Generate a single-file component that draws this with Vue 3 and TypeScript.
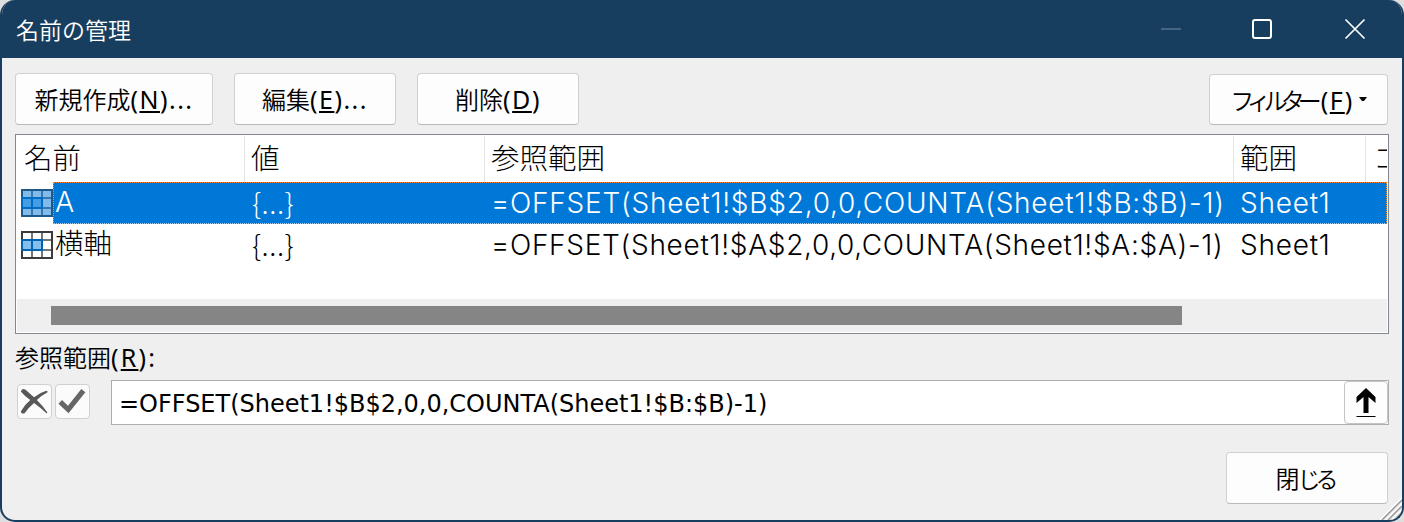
<script setup lang="ts">
import { ref } from 'vue'

interface DefinedName {
  name: string
  value: string
  refersTo: string
  scope: string
}

const names: DefinedName[] = [
  { name: 'A', value: '{...}', refersTo: '=OFFSET(Sheet1!$B$2,0,0,COUNTA(Sheet1!$B:$B)-1)', scope: 'Sheet1' },
  { name: '横軸', value: '{...}', refersTo: '=OFFSET(Sheet1!$A$2,0,0,COUNTA(Sheet1!$A:$A)-1)', scope: 'Sheet1' },
]

const actions = [
  { label: '新規作成', key: 'N', tail: '...', kind: 'new' },
  { label: '編集', key: 'E', tail: '...', kind: 'edit' },
  { label: '削除', key: 'D', tail: '', kind: 'delete' },
]

const selected = ref(0)
</script>

<template>
  <div class="desktop">
    <div class="window">
      <header class="titlebar">
        <h1 class="title">名前の管理</h1>
        <div class="controls">
          <svg class="control dim" viewBox="0 0 22 22"><path d="M1 11H21" /></svg>
          <svg class="control" viewBox="0 0 22 22"><rect x="2" y="2" width="18" height="18" rx="2" /></svg>
          <svg class="control thin" viewBox="0 0 22 22"><path d="M1.5 1.5L20.5 20.5M20.5 1.5L1.5 20.5" /></svg>
        </div>
      </header>

      <main class="body">
        <div class="toolbar">
          <button v-for="a in actions" :key="a.key" class="btn" :class="a.kind">
            <span class="jp">{{ a.label }}</span><span class="lat">(<u>{{ a.key }}</u>){{ a.tail }}</span>
          </button>
          <button class="btn filter">
            <span class="kana">フィルター</span><span class="lat">(<u>F</u>)</span>
            <svg class="caret" viewBox="0 0 8 5"><path d="M0 0H8L5 4H3Z" /></svg>
          </button>
        </div>

        <div class="list">
          <div class="row head">
            <span class="cell first">名前</span>
            <span class="cell">値</span>
            <span class="cell">参照範囲</span>
            <span class="cell">範囲</span>
            <span class="cell last">コ</span>
          </div>
          <div
            v-for="(n, i) in names"
            :key="n.name"
            class="row item"
            :class="{ selected: i === selected }"
            @click="selected = i"
          >
            <svg class="grid-icon" viewBox="0 0 32 28">
              <rect class="paper" x="1" y="1" width="30" height="26" />
              <path class="lines" d="M11 1V27M21 1V27M1 9H31M1 19H31" />
              <rect class="edge" x="1" y="1" width="30" height="26" />
              <rect class="range" x="1" y="9" width="20" height="10" />
              <path class="range-line" d="M11 9V19" />
            </svg>
            <div class="fields">
              <span class="name">{{ n.name }}</span>
              <span class="value">{{ n.value }}</span>
              <span class="refers">{{ n.refersTo }}</span>
              <span class="scope">{{ n.scope }}</span>
            </div>
          </div>
          <div class="scrollbar"><div class="thumb"></div></div>
        </div>

        <div class="label"><span class="jp">参照範囲</span><span class="lat">(<u>R</u>):</span></div>

        <div class="editor">
          <button class="tool">
            <svg viewBox="0 0 35 35">
              <path fill="#585858" d="M3 7Q4 3 8 5L17 13Q23 8 30 6Q32 6 31 8Q25 11 20 16Q27 23 31 29Q31 31 29 29Q24 24 17 19Q11 24 7 30Q3 31 3 28Q7 21 13 16Q7 12 3 7Z" />
            </svg>
          </button>
          <button class="tool check">
            <svg viewBox="0 0 35 35"><path fill="none" stroke="#666" stroke-width="5.5" d="M4.5 18L13 26L29 6" /></svg>
          </button>
          <div class="field">
            <span class="formula">{{ names[selected].refersTo }}</span>
            <button class="pick">
              <svg viewBox="0 0 20 30"><path d="M10 0L19.5 9V15L12.5 9V25H7.5V9L.5 15V9ZM.5 28H19.5V29H.5Z" /></svg>
            </button>
          </div>
        </div>

        <div class="footer"><button class="btn close"><span class="jp">閉</span><span class="hira">じる</span></button></div>
      </main>
      <svg class="grip" viewBox="0 0 22 22">
        <path stroke="#fff" d="M0 22L22 0M6 22L22 6M12 22L22 12" />
        <path stroke="#999" d="M2 22L22 2M8 22L22 8M14 22L22 14" />
      </svg>
    </div>
  </div>
</template>

<style>
body {
  margin: 0;
  overflow: hidden;
}
</style>

<style scoped>
* {
  box-sizing: border-box;
}
.desktop {
  width: 1404px;
  height: 522px;
  background: #dedede;
}
.window {
  position: relative;
  width: 1404px;
  height: 522px;
  overflow: hidden;
  border: 2px solid #183e5f;
  border-top: 0;
  border-radius: 15px;
  background: #efefef;
  color: #000;
  font-family: 'Noto Sans CJK JP', sans-serif;
}
.titlebar {
  display: flex;
  align-items: center;
  justify-content: space-between;
  height: 58px;
  padding: 0 36px 0 14px;
  background: #183e5f;
}
.title {
  margin: 0;
  color: #fff;
  font-size: 23px;
  font-weight: 350;
  line-height: 56px;
}
.controls {
  display: flex;
  gap: 71px;
}
.control {
  width: 22px;
  height: 22px;
  fill: none;
  stroke: #fff;
  stroke-width: 2;
}
.control.dim {
  margin-right: -1px;
  transform: translateX(1px);
  stroke: #456580;
}
.control.thin {
  stroke-width: 1.7;
}
.body {
  padding: 15px 13px 0;
}
.toolbar {
  display: flex;
  gap: 21px;
}
.btn {
  display: flex;
  align-items: center;
  justify-content: center;
  height: 52px;
  padding: 0;
  border: 1px solid #d0d0d0;
  border-bottom-color: #b9b9b9;
  border-radius: 4px;
  background: #fdfdfd;
  color: #000;
  font-family: 'Noto Sans CJK JP', sans-serif;
  font-size: 24px;
  font-weight: 350;
  line-height: 50px;
  white-space: nowrap;
}
.new {
  width: 198px;
}
.edit,
.delete,
.close {
  width: 162px;
}
.close {
  margin-right: 1px;
}
.filter {
  width: 179px;
  height: 51px;
  margin: 1px 1px 0 auto;
}
.jp {
  font-size: 24px;
}
.lat {
  font-family: 'Noto Sans', sans-serif;
  font-size: 25px;
  font-weight: 400;
  letter-spacing: 1.5px;
}
u {
  text-decoration-thickness: 2px;
  text-underline-offset: 2px;
}
.kana {
  margin-right: 6px;
  letter-spacing: -7px;
}
.caret {
  width: 8px;
  height: 5px;
  margin-left: 5px;
}
.list {
  height: 200px;
  margin-top: 9px;
  overflow: hidden;
  border: 1px solid #828790;
  background: #fff;
  font-size: 28.5px;
  font-weight: 300;
}
.row {
  display: flex;
  white-space: nowrap;
}
.head {
  display: grid;
  grid-template-columns: 229px 240px 749px 132px 1fr;
  height: 47px;
  padding-top: 1px;
  line-height: 41px;
}
.cell {
  overflow: hidden;
  padding-left: 6px;
  border-right: 1px solid #e5e5e5;
}
.cell.first {
  padding-left: 8px;
}
.cell.last {
  border: 0;
  padding-left: 7px;
  margin-right: 1px;
}
.item {
  height: 42px;
  padding: 0 1px 0 5px;
  line-height: 37px;
}
.grid-icon {
  flex: none;
  width: 32px;
  height: 28px;
  margin-top: 7px;
}
.paper {
  fill: #fff;
}
.lines {
  fill: none;
  stroke: #757575;
  stroke-width: 2;
}
.edge {
  fill: none;
  stroke: #3b3b3b;
  stroke-width: 2;
}
.range {
  fill: #83beec;
  stroke: #0063b1;
  stroke-width: 2;
}
.range-line {
  stroke: #0063b1;
  stroke-width: 2;
}
.selected .paper {
  fill: #80bbeb;
}
.selected .lines {
  stroke: #3b77a8;
}
.selected .edge {
  stroke: #1d598b;
}
.selected .range {
  fill: #429de3;
  stroke: #006cc5;
}
.selected .range-line {
  stroke: #006cc5;
}
.fields {
  display: grid;
  grid-template-columns: 197px 239px 749px 1fr;
  flex: 1;
  border: 1px dotted transparent;
}
.fields span {
  padding-left: 1px;
}
.selected .fields {
  border-color: #ff8728;
  border-bottom-color: #a8d2f5;
  background: #0078d7;
  color: #fff;
}
.name,
.refers,
.scope {
  font-family: Inter, 'Noto Sans CJK JP', sans-serif;
}
.name {
  line-height: 38px;
}
.value {
  letter-spacing: 0.6px;
}
.refers,
.scope {
  font-size: 28px;
  letter-spacing: 0.77px;
  line-height: 40px;
}
.item:not(.selected) .refers {
  letter-spacing: 0.7px;
}
.scrollbar {
  height: 33px;
  margin: 33px 1px 0;
  padding: 7px 0 0 34px;
  background: #efefef;
}
.thumb {
  width: 1131px;
  height: 19px;
  background: #858585;
}
.label {
  display: flex;
  height: 46px;
  font-weight: 350;
  line-height: 46px;
}
.label .lat {
  letter-spacing: 2.2px;
}
.editor {
  display: flex;
}
.tool {
  width: 35px;
  height: 35px;
  margin: 4px 3px 0 2px;
  padding: 0;
  border: 1px solid #d0d0d0;
  border-radius: 4px;
  background: #fbfbfb;
}
.tool.check {
  margin: 4px 21px 0 0;
}
.tool svg {
  display: block;
  width: 33px;
  height: 33px;
}
.field {
  display: flex;
  flex: 1;
  justify-content: space-between;
  height: 45px;
  border: 1px solid #abadb3;
  background: #fff;
}
.formula {
  padding-left: 7px;
  font-family: 'DejaVu Sans', sans-serif;
  font-size: 24px;
  letter-spacing: -0.01px;
  line-height: 46px;
}
.pick {
  display: flex;
  align-items: center;
  justify-content: center;
  width: 44px;
  height: 43px;
  padding: 0;
  border: 1px solid #c4c4c4;
  border-radius: 4px;
  background: #fdfdfd;
}
.pick svg {
  width: 20px;
  height: 30px;
  margin-right: 1px;
}
.footer {
  display: flex;
  justify-content: flex-end;
  margin-top: 27px;
}
.hira {
  margin: 0 5px 0 -2px;
  font-size: 23px;
  letter-spacing: -5px;
}
.grip {
  position: absolute;
  right: 0;
  bottom: 0;
  width: 22px;
  height: 22px;
  fill: none;
  stroke-width: 1.5;
}
</style>
